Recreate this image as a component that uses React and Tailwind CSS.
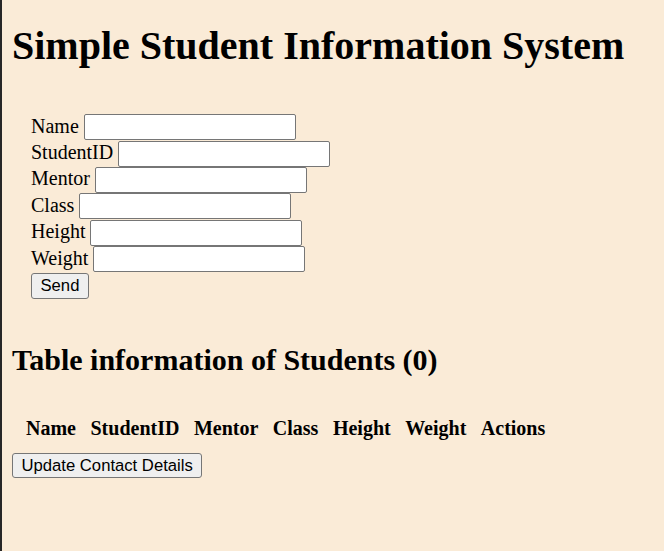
import React from "react";

const fields = ["Name", "StudentID", "Mentor", "Class", "Height", "Weight"];
const headers = ["Name", "StudentID", "Mentor", "Class", "Height", "Weight", "Actions"];

export default function App() {
  return (
    <div className="min-h-screen bg-[#faebd7] border-l-2 border-[#262626] pl-[10px] text-black font-['Liberation_Serif','Times_New_Roman',serif] overflow-hidden">
      <h1 className="mt-[23px] text-[40px] leading-[46px] font-bold whitespace-nowrap">
        Simple Student Information System
      </h1>
      <form className="mt-[45px] ml-[19px] flex flex-col" onSubmit={(e) => e.preventDefault()}>
        {fields.map((f) => (
          <div key={f} className="flex items-center h-[26.4px] text-[20px] leading-[23px]">
            <label className="mr-[5px] pb-[2px]">{f}</label>
            <input
              type="text"
              className="w-[212px] h-[26px] bg-white border border-[#767676] rounded-[2px] px-[2px] text-[16.67px] font-['Liberation_Sans',Arial,sans-serif] outline-none"
            />
          </div>
        ))}
        <div className="mt-[1px]">
          <button
            type="submit"
            className="h-[26px] px-[8.5px] bg-[#efefef] border border-[#767676] rounded-[3px] text-[16.67px] leading-[20px] font-['Liberation_Sans',Arial,sans-serif]"
          >
            Send
          </button>
        </div>
      </form>
      <h2 className="mt-[44px] text-[30px] leading-[34.5px] font-bold whitespace-nowrap">
        Table information of Students (0)
      </h2>
      <table className="mt-[39.5px] ml-[6.75px] border-separate border-spacing-0">
        <thead>
          <tr>
            {headers.map((h) => (
              <th key={h} className="px-[7.25px] py-0 text-[20px] leading-[23px] font-bold text-center">
                {h}
              </th>
            ))}
          </tr>
        </thead>
        <tbody></tbody>
      </table>
      <button
        type="button"
        className="mt-[13px] h-[25px] px-[8.5px] bg-[#efefef] border border-[#767676] rounded-[3px] text-[16.67px] leading-[20px] font-['Liberation_Sans',Arial,sans-serif]"
      >
        Update Contact Details
      </button>
    </div>
  );
}
